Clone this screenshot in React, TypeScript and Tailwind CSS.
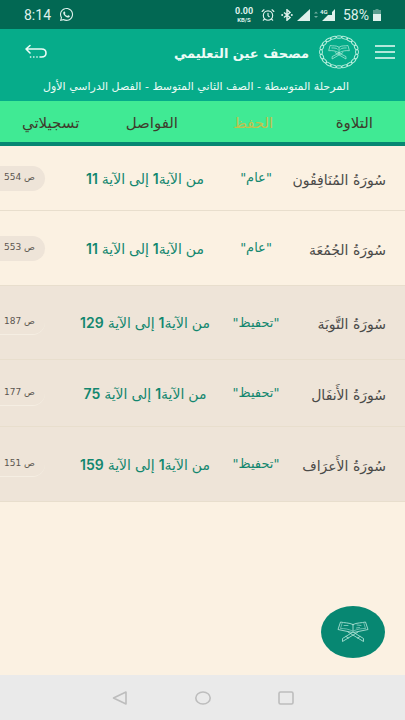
import { AlarmClock } from 'lucide-react';
import { FaWhatsapp } from 'react-icons/fa';

interface Portion {
    id: number;
    surah: string;
    kind: string;
    to: number;
    page: number;
    shaded: boolean;
    height: string;
}

const portions: Portion[] = [
    { id: 1, surah: 'سُورَةُ المُنَافِقُون', kind: 'عام', to: 11, page: 554, shaded: false, height: 'min-h-[65px]' },
    { id: 2, surah: 'سُورَةُ الجُمُعَة', kind: 'عام', to: 11, page: 553, shaded: false, height: 'min-h-[75px]' },
    { id: 3, surah: 'سُورَةُ التَّوبَة', kind: 'تحفيظ', to: 129, page: 187, shaded: true, height: 'min-h-[74px]' },
    { id: 4, surah: 'سُورَةُ الأَنفَال', kind: 'تحفيظ', to: 75, page: 177, shaded: true, height: 'min-h-[67px]' },
    { id: 5, surah: 'سُورَةُ الأَعرَاف', kind: 'تحفيظ', to: 159, page: 151, shaded: true, height: 'min-h-[75px]' },
];

const tabs = [
    { id: 'recite', label: 'التلاوة' },
    { id: 'memorize', label: 'الحفظ' },
    { id: 'bookmarks', label: 'الفواصل' },
    { id: 'recordings', label: 'تسجيلاتي' },
];

// open book resting on a folding stand
function BookStand({ className }: { className: string }) {
    return (
        <svg viewBox="0 0 32 22" className={className} fill="none" stroke="currentColor" strokeWidth="0.9" strokeLinejoin="round" strokeLinecap="round" aria-hidden="true">
            <path d="M16 3.500C12 1.500 7 2 3.500 1L1 8.500l14.500 3h1l14.500-3L28.500 1C25 2 20 1.500 16 3.500zM16 3.500v8" />
            <path d="M5 2.500 3.500 7.500c4 0 8 .5 12 2.500M27 2.500l1.500 5c-4 0-8 .5-12 2.500" strokeWidth="0.6" />
            <path d="M7 4.500h4M20 4l4 .5M19.500 7l3-.5" strokeWidth="0.7" />
            <path d="M11 11 26.500 20.500v-3L17.500 12M21 11 5.500 20.500v-3L14.500 12M9 15.500l2.500 1.500M23 15.500l-2.500 1.500" />
        </svg>
    );
}

function Emblem() {
    const links = Array.from({ length: 20 }, (_, i) => i * 18);

    return (
        <svg viewBox="0 0 40 34" className="h-[34px] w-10" fill="none" stroke="#bdf0df" aria-hidden="true">
            <g transform="translate(20 17) scale(1 .83)">
                {links.map((angle) => (
                    <ellipse key={angle} cx="0" cy="-18" rx="3.100" ry="1.500" strokeWidth="1" transform={`rotate(${angle})`} />
                ))}
            </g>
            <g transform="translate(9 9.500) scale(.69)" strokeWidth="1">
                <path d="M16 4C12 1 7 2.500 3 1.500L1 9c5-.5 10 0 15 3 5-3 10-3.500 15-3l-2-7.500C25 2.500 20 1 16 4zM16 4v8" />
                <path d="M5 5c4 0 7 0 9 2M27 5c-4 0-7 0-9 2M10 11.500 26 21v-3.500L15 12M22 11.500 6 21v-3.500L17 12" />
            </g>
        </svg>
    );
}

function StatusBar() {
    return (
        <div dir="ltr" className="flex h-[29px] items-center justify-between bg-[#026853] px-6 font-['Roboto',sans-serif] text-[#dff1ec]">
            <div className="flex items-center gap-2">
                <span className="text-sm">8:14</span>
                <FaWhatsapp size={15} />
            </div>
            <div className="flex items-center">
                <span className="flex w-[18px] flex-col text-center font-bold">
                    <span className="text-[9px] leading-[10px]">0.00</span>
                    <span className="text-[6px] leading-[8px]">KB/S</span>
                </span>
                <AlarmClock size={14} strokeWidth={2} className="ml-2" />
                <svg viewBox="0 0 12 12" className="ml-1.5 h-3 w-3" fill="currentColor" aria-hidden="true">
                    <path d="M3 3.500 9 8.500 6 11.200V.8L9 3.500l-6 5" fill="none" stroke="currentColor" strokeWidth="1.500" />
                    <circle cx="1.200" cy="6" r="1" />
                    <circle cx="10.800" cy="6" r="1" />
                </svg>
                <svg viewBox="0 0 13 12" className="ml-1 h-3 w-[13px]" fill="currentColor" aria-hidden="true">
                    <path d="M13 0v12H0z" />
                </svg>
                <svg viewBox="0 0 21 13" className="ml-1 h-[13px] w-[21px]" fill="currentColor" aria-hidden="true">
                    <path d="M0 5.500l2-2 2 2zM0 8l2 2 2-2z" opacity=".5" />
                    <path d="M21 1v12H8l6-6h4V4z" />
                    <text x="6" y="6" fontSize="6" fontWeight="700">4G</text>
                </svg>
                <span className="ml-2 text-sm">58%</span>
                <svg viewBox="0 0 8 12" className="ml-1 h-3 w-2" fill="currentColor" aria-hidden="true">
                    <path d="M2.500 0h3v1H8v4H0V1h2.500z" opacity=".4" />
                    <path d="M0 5h8v7H0z" />
                </svg>
            </div>
        </div>
    );
}

function Header() {
    return (
        <header className="bg-[#06ac8a] pb-0.5 text-[#ecfbf6]">
            <div className="flex h-[46px] items-center pl-6 pr-2.5">
                <button aria-label="القائمة" className="flex h-10 w-5 items-center justify-center">
                    <svg viewBox="0 0 20 14" className="h-3.5 w-5" stroke="currentColor" strokeWidth="1.500" aria-hidden="true">
                        <path d="M0 1h20M0 7h20M0 13h20" />
                    </svg>
                </button>
                <span className="mr-4">
                    <Emblem />
                </span>
                <h1 className="mr-2.5 whitespace-nowrap pt-1 text-[13px] font-bold">مصحف عين التعليمي</h1>
                <button aria-label="رجوع" className="mr-auto flex h-10 w-6 items-center justify-center">
                    <svg viewBox="0 0 24 16" className="h-4 w-6" fill="none" stroke="currentColor" strokeWidth="1.600" strokeLinecap="round" strokeLinejoin="round" aria-hidden="true">
                        <path d="M6 1.500 2 5l4 4M2 5h15.500c6 0 6 8 0 8H16" />
                        <path d="M6.500 13h7" strokeDasharray=".2 3" />
                    </svg>
                </button>
            </div>
            <p className="whitespace-nowrap pr-14 text-[11px] leading-6">
                المرحلة المتوسطة - الصف الثاني المتوسط - الفصل الدراسي الأول
            </p>
        </header>
    );
}

function PortionRow({ portion }: { portion: Portion }) {
    return (
        <li
            className={`grid grid-cols-[96px_68px_1fr_68px] items-center border-b border-[#e8decd] pr-[19px] ${portion.height} ${portion.shaded ? 'bg-[#eee4d8]' : ''}`}
        >
            <h2 className="whitespace-nowrap pt-1 text-[14px] text-[#4a4a48]">{portion.surah}</h2>
            <span className="text-center text-[13px] text-[#12876f]">"{portion.kind}"</span>
            <span className="whitespace-nowrap text-center font-['Inter','DejaVu_Sans',sans-serif] text-[14px] text-[#12876f]">
                من الآية<b className="font-semibold">1</b> إلى الآية <b className="font-semibold">{portion.to}</b>
            </span>
            <span
                className={`flex h-[25px] w-[45px] items-center justify-self-end rounded-r-full pr-2.5 text-[9px] text-[#5c5650] ${portion.shaded ? 'border-b border-[#f5eee3]' : 'bg-[#eee4d8]'}`}
            >
                ص&nbsp;{portion.page}
            </span>
        </li>
    );
}

export default function App() {
    return (
        <div dir="rtl" className="relative flex min-h-screen flex-col bg-[#fbf1e2] font-['DejaVu_Sans',sans-serif]">
            <StatusBar />
            <Header />

            <nav className="grid h-[45px] grid-cols-4 border-b-4 border-[#078772] bg-[#40ea94]">
                {tabs.map((tab) => (
                    <button
                        key={tab.id}
                        className={`pt-1 text-[15px] ${tab.id === 'memorize' ? 'text-[#c3c14c]' : 'text-[#3f3a2c]'}`}
                    >
                        {tab.label}
                    </button>
                ))}
            </nav>

            <main className="flex-1">
                <ul>
                    {portions.map((portion) => (
                        <PortionRow key={portion.id} portion={portion} />
                    ))}
                </ul>
            </main>

            <button
                aria-label="فتح المصحف"
                className="absolute bottom-[62px] right-5 flex h-[52px] w-16 items-center justify-center rounded-[50%] bg-[#078772] text-[#a9e0d3]"
            >
                <BookStand className="h-[22px] w-8" />
            </button>

            <footer dir="ltr" className="flex h-[45px] items-center justify-center gap-[67px] bg-[#eaeaea] text-[#bdbdbd]">
                <button aria-label="السابق">
                    <svg viewBox="0 0 16 14" className="h-3.5 w-4" fill="none" stroke="currentColor" strokeWidth="1.600" strokeLinejoin="round" aria-hidden="true">
                        <path d="M14 1v12L1.500 7z" />
                    </svg>
                </button>
                <button aria-label="الرئيسية">
                    <svg viewBox="0 0 16 14" className="h-3.5 w-4" fill="none" stroke="currentColor" strokeWidth="1.600" aria-hidden="true">
                        <ellipse cx="8" cy="7" rx="7.200" ry="6" />
                    </svg>
                </button>
                <button aria-label="التطبيقات">
                    <svg viewBox="0 0 16 14" className="h-3.5 w-4" fill="none" stroke="currentColor" strokeWidth="1.600" aria-hidden="true">
                        <rect x="1" y="1" width="14" height="12" rx="1.500" />
                    </svg>
                </button>
            </footer>
        </div>
    );
}
